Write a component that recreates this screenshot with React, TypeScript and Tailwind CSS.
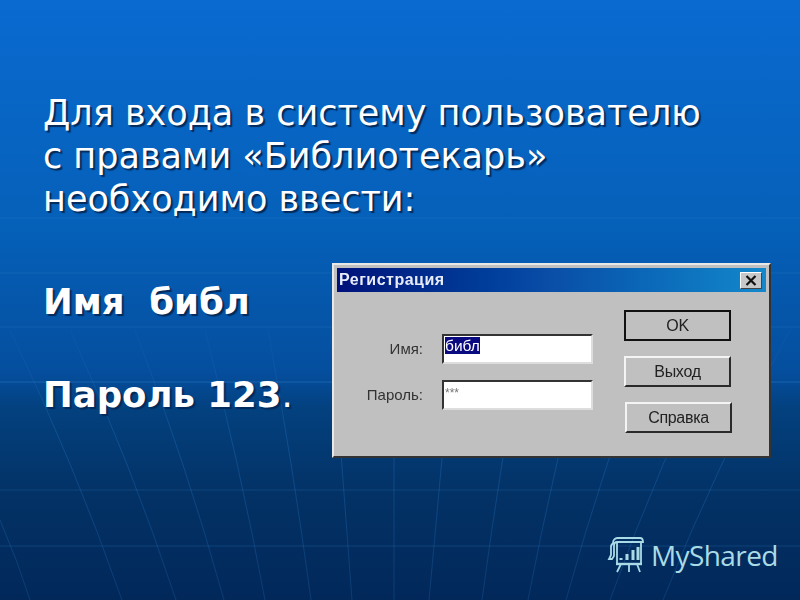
const bevelOut = "border-t-2 border-l-2 border-t-[#f4f4f4] border-l-[#f4f4f4] border-r-2 border-b-2 border-r-[#2a2a2a] border-b-[#2a2a2a]";
const verticals = [
  [0,520,30,600],[10,330,122,600],[70,330,176,600],[135,330,224,600],[205,330,265,600],[268,330,311,600],
  [330,330,352,600],[394,330,394,600],[456,330,429,600],[525,330,482,600],[590,330,528,600],[655,330,566,600],[725,330,610,600],[790,330,663,600],
];
function Lines() {
  return (
    <svg className="absolute inset-0 h-full w-full" viewBox="0 0 800 600" fill="none">
      <defs>
        <linearGradient id="fade" gradientUnits="userSpaceOnUse" x1="0" y1="330" x2="0" y2="600">
          <stop offset="0" stopColor="#2a7fd0" stopOpacity="0.08" />
          <stop offset="0.4" stopColor="#2a7fd0" stopOpacity="0.3" />
          <stop offset="1" stopColor="#2a7fd0" stopOpacity="0.22" />
        </linearGradient>
      </defs>
      {[218, 273, 327, 382, 490, 546].map((y) => (
        <path key={y} d={`M0 ${y}H800`} stroke="#3a8ad8" strokeOpacity={y === 382 ? 0.4 : 0.22} />
      ))}
      {verticals.map(([a, b, c, d], i) => (
        <path key={i} d={`M${a} ${b}Q${(a + c) / 2 + (c - a) * 0.08} ${(b + d) / 2} ${c} ${d}`} stroke="url(#fade)" />
      ))}
    </svg>
  );
}
function Btn({ label, def, cls }: { label: string; def?: boolean; cls: string }) {
  return (
    <div className={`flex h-[31px] items-center justify-center bg-[#c0c0c0] text-[16px] tracking-[-0.3px] text-[#222] ${bevelOut} ${def ? "outline-2 -outline-offset-2 outline-[#111]" : ""} ${cls}`}>
      {label}
    </div>
  );
}
function Field({ label, children }: { label: string; children: React.ReactNode }) {
  return (
    <div className="flex items-center">
      <span className="w-[86px] text-right text-[15px] text-[#333]">{label}</span>
      <div className="ml-[19px] h-[30px] w-[151px] border-t-2 border-l-2 border-t-[#333] border-l-[#333] border-r-2 border-b-2 border-r-[#ddd] border-b-[#ddd] bg-white pl-[1px] text-[15.5px] leading-[20px]">
        {children}
      </div>
    </div>
  );
}
function Dialog() {
  return (
    <div className="h-[195px] w-[439px] shrink-0 border-2 border-t-[#e8e8e8] border-l-[#e8e8e8] border-r-[#333] border-b-[#333] bg-[#c0c0c0] p-[3px] blur-[0.4px] [font-family:'Liberation_Sans',sans-serif]">
      <div className="flex h-[24px] items-center justify-between bg-gradient-to-r from-[#00107a] via-[#0a4ea8] to-[#1488cc] pl-[2px] pr-[4px]">
        <span className="text-[16px] font-bold tracking-[0.5px] text-[#e8ecf8]">Регистрация</span>
        <div className="flex h-[17px] w-[22px] items-center justify-center border border-t-white border-l-white border-r-[#444] border-b-[#444] bg-[#c8c8c8]">
          <svg width="12" height="11" viewBox="0 0 12 11"><path d="M1.5 1L10.5 10M10.5 1L1.5 10" stroke="#111" strokeWidth="2.2" /></svg>
        </div>
      </div>
      <div className="flex">
        <div className="flex w-[282px] flex-col gap-[16px] pt-[42px]">
          <Field label="Имя:">
            <span className="bg-[#0a0a80] text-white">библ</span>
          </Field>
          <Field label="Пароль:">
            <span className="text-[12px] leading-[14px] text-[#777]">***</span>
          </Field>
        </div>
        <div className="flex flex-col gap-[15px] pl-[5px] pt-[18px]">
          <Btn label="OK" def cls="w-[107px]" />
          <Btn label="Выход" cls="w-[107px]" />
          <Btn label="Справка" cls="ml-[1px] w-[107px]" />
        </div>
      </div>
    </div>
  );
}
function Logo() {
  return (
    <div className="absolute left-[607px] top-[536px] flex items-center gap-[7px] text-[#a9dbe6]">
      <svg width="37" height="37" viewBox="0 0 37 37" fill="none" stroke="currentColor" strokeWidth="1.8">
        <path d="M6 7C6 3 9 2 11 2H33C35 2 36 4 36 6H10C8 6 7 8 7 10V20L5 23H2L4 19V11C4 9 5 8 6 7Z" />
        <path d="M10 6V28H34V6" />
        <path d="M9 28H35" strokeWidth="2.4" />
        <path d="M14 28L10 36M22 28V36M30 28L33 36" />
        <path d="M14 24V22M20 24V18M26 24V14M31 24V11" strokeWidth="3" />
      </svg>
      <span className="text-[28px] leading-none tracking-[-0.6px] [font-family:'Open_Sans',sans-serif]">MyShared</span>
    </div>
  );
}
export default function App() {
  return (
    <div className="relative h-[600px] w-[800px] overflow-hidden bg-[linear-gradient(to_bottom,#0a6ad0_0%,#0560b8_38%,#054e9e_62%,#03417f_68%,#033266_82%,#02285a_100%)] text-white [font-family:'DejaVu_Sans',sans-serif]">
      <Lines />
      <div className="relative pl-[43px] pt-[92px]">
        <div className="text-[35px] leading-[43px] [text-shadow:2px_2px_1px_#032a5a]">
          <p>Для входа в систему пользователю</p>
          <p>с правами «Библиотекарь»</p>
          <p>необходимо ввести:</p>
        </div>
        <div className="mt-[42px] flex">
          <div className="w-[289px] pt-[17px] text-[35.5px] font-bold leading-[43px] [text-shadow:2px_2px_1px_#032a5a]">
            <p className="whitespace-pre">Имя  библ</p>
            <p className="mt-[50px]">Пароль 123<span className="font-normal">.</span></p>
          </div>
          <Dialog />
        </div>
      </div>
      <Logo />
    </div>
  );
}
